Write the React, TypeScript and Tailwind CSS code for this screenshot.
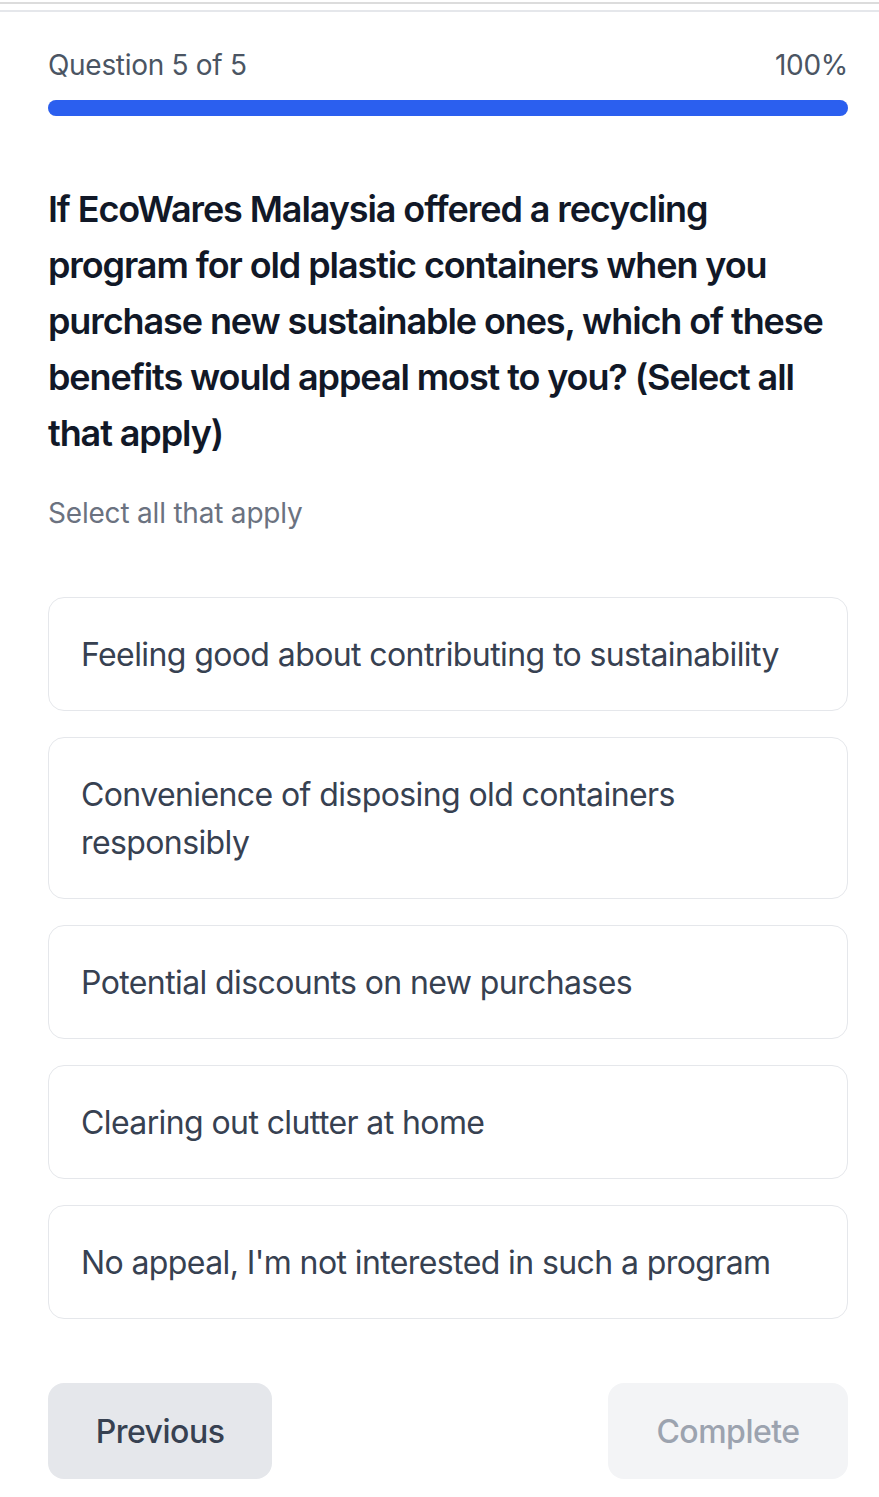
import React from "react";

const options = [
  "Feeling good about contributing to sustainability",
  "Convenience of disposing old containers responsibly",
  "Potential discounts on new purchases",
  "Clearing out clutter at home",
  "No appeal, I'm not interested in such a program",
];

export default function App() {
  return (
    <div className="h-[1497px] overflow-hidden bg-white font-['Inter','Noto_Sans',sans-serif]">
      <div className="pt-[2px]">
        <div className="h-[2px] bg-[#dcdcdc]" />
        <div className="mt-[6px] h-[2px] bg-[#e5e7eb]" />
      </div>
      <div className="pl-12 pr-[31px]">
        <div className="mt-[33px] flex items-center justify-between text-[28px] leading-[40px] tracking-[-0.3px] text-[#4b5563]">
          <span>Question 5 of 5</span>
          <span>100%</span>
        </div>
        <div className="mt-[15px] h-4 w-full rounded-full bg-[#e5e7eb]">
          <div className="h-4 w-full rounded-full bg-[#2b5fef]" />
        </div>
        <h2 className="mt-[65px] text-[36px] font-semibold leading-[56px] tracking-[-1.1px] text-[#111827]">
          If EcoWares Malaysia offered a recycling program for old plastic containers when you purchase new sustainable ones, which of these benefits would appeal most to you? (Select all that apply)
        </h2>
        <p className="mt-8 text-[28px] leading-[40px] tracking-[-0.2px] text-[#6b7280]">Select all that apply</p>
        <div className="mt-16 flex flex-col gap-[26px]">
          {options.map((o) => (
            <div
              key={o}
              className="rounded-2xl border border-[#e5e7eb] bg-white px-8 pt-[33px] pb-[31px] text-[32px] leading-[48px] tracking-[-0.6px] text-[#374151]"
            >
              {o}
            </div>
          ))}
        </div>
        <div className="mt-16 flex items-center justify-between">
          <button className="h-24 w-[224px] rounded-2xl bg-[#e5e7eb] pt-[2px] text-[32px] font-medium tracking-[-0.5px] text-[#374151]">
            Previous
          </button>
          <button className="h-24 w-[240px] rounded-2xl bg-[#f3f4f6] pt-[2px] text-[32px] font-medium tracking-[-0.5px] text-[#9ca3af]">
            Complete
          </button>
        </div>
      </div>
    </div>
  );
}
